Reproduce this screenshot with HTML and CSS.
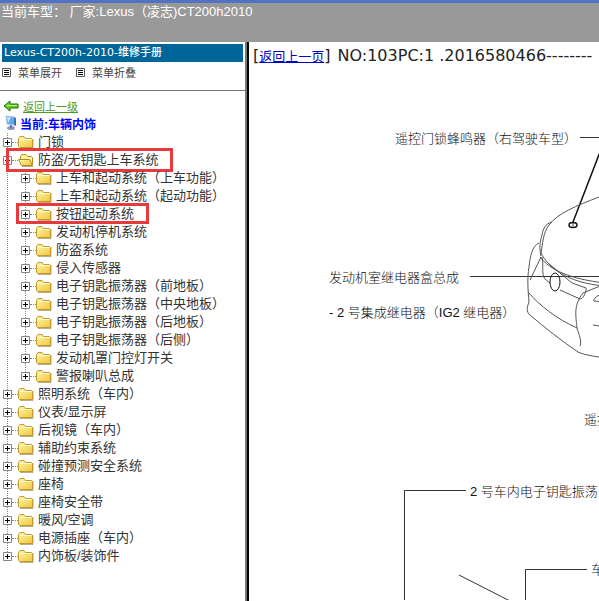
FILE: index.html
```
<!DOCTYPE html>
<html lang="zh-CN">
<head>
<meta charset="UTF-8">
<title>Lexus-CT200h-2010-维修手册</title>
<link rel="stylesheet" href="styles.css">
</head>
<body>
<!-- shared icons -->
<svg class="defs" width="0" height="0">
  <defs>
    <linearGradient id="gold" x1="0" y1="0" x2="1" y2="1">
      <stop offset="0" stop-color="#fff6a8"/>
      <stop offset="1" stop-color="#f0c63c"/>
    </linearGradient>
    <symbol id="plus" viewBox="0 0 9 9">
      <path d="M.5 .5h8v8h-8z" fill="#fff" stroke="#848484"/>
      <path d="M2 4.5h5M4.5 2v5" stroke="#000"/>
    </symbol>
    <symbol id="minus" viewBox="0 0 9 9">
      <path d="M.5 .5h8v8h-8z" fill="#fff" stroke="#848484"/>
      <path d="M2 4.5h5" stroke="#000"/>
    </symbol>
    <symbol id="folder" viewBox="0 0 16 14">
      <path d="M2 13.5h13V4" fill="none" stroke="#8a7a40" opacity=".6"/>
      <path d="M.5 11.500V3.500L2 1.500h4l1.500 2h6l1 1v8h-13z" fill="url(#gold)" stroke="#c29a2c"/>
      <path d="M2 4.500h11.500" stroke="#fffbd0"/>
    </symbol>
    <symbol id="folder-open" viewBox="0 0 16 14">
      <path d="M2.500 11V3.500L4 1.500h4l1.500 2h4l1 1v7z" fill="#fff3a0" stroke="#b08c24"/>
      <path d="M.5 6.500h11l3 6h-11z" fill="url(#gold)" stroke="#b08c24"/>
      <path d="M4 13.500h11" stroke="#8a7a40" opacity=".6"/>
    </symbol>
    <symbol id="list" viewBox="0 0 9 9">
      <path d="M.5 .5h8v8h-8z" fill="#fff" stroke="#555"/>
      <path d="M2 2.500h5M2 4.500h5M2 6.500h5" stroke="#000"/>
    </symbol>
  </defs>
</svg>

<header class="top">当前车型：&nbsp;厂家:Lexus（凌志)CT200h2010</header>

<div class="frames">
  <aside class="side">
    <h1 class="side-title">Lexus-CT200h-2010-维修手册</h1>
    <div class="tools">
      <button type="button" id="expand"><svg width="9" height="9"><use href="#list"/></svg>菜单展开</button>
      <button type="button" id="collapse"><svg width="9" height="9"><use href="#list"/></svg>菜单折叠</button>
    </div>

    <div class="where">
      <a class="back" href="#"><svg width="16" height="12" viewBox="0 0 16 12"><path d="M1 6l6-5v3h8v4H7v3z" fill="#5fd21c" stroke="#1c6b0c"/><path d="M4 5.500h10" stroke="#b6f58a"/></svg><span>返回上一级</span></a>
      <div class="current"><svg width="16" height="16" viewBox="0 0 16 16"><path d="M3 1l8 1 1 8-8-1z" fill="#5aaef0" stroke="#a9c4dc"/><path d="M4 2l4 .5L5 8z" fill="#c8e8ff"/><path d="M11 2l2 1v8l-2-1z" fill="#3a6fb8"/><ellipse cx="8" cy="13" rx="4" ry="2" fill="#8e98c8"/><path d="M7 10h2v3H7z" fill="#6a78b0"/></svg>当前:车辆内饰</div>
    </div>

    <ul class="tree">
      <li><div class="row"><svg class="box"><use href="#plus"/></svg><svg class="folder"><use href="#folder"/></svg><a href="#">门锁</a></div></li>
      <li>
        <div class="row marked"><svg class="box"><use href="#minus"/></svg><svg class="folder"><use href="#folder-open"/></svg><a href="#">防盗/无钥匙上车系统</a></div>
        <ul>
          <li><div class="row"><svg class="box"><use href="#plus"/></svg><svg class="folder"><use href="#folder"/></svg><a href="#">上车和起动系统（上车功能）</a></div></li>
          <li><div class="row"><svg class="box"><use href="#plus"/></svg><svg class="folder"><use href="#folder"/></svg><a href="#">上车和起动系统（起动功能）</a></div></li>
          <li><div class="row marked"><svg class="box"><use href="#plus"/></svg><svg class="folder"><use href="#folder"/></svg><a href="#">按钮起动系统</a></div></li>
          <li><div class="row"><svg class="box"><use href="#plus"/></svg><svg class="folder"><use href="#folder"/></svg><a href="#">发动机停机系统</a></div></li>
          <li><div class="row"><svg class="box"><use href="#plus"/></svg><svg class="folder"><use href="#folder"/></svg><a href="#">防盗系统</a></div></li>
          <li><div class="row"><svg class="box"><use href="#plus"/></svg><svg class="folder"><use href="#folder"/></svg><a href="#">侵入传感器</a></div></li>
          <li><div class="row"><svg class="box"><use href="#plus"/></svg><svg class="folder"><use href="#folder"/></svg><a href="#">电子钥匙振荡器（前地板）</a></div></li>
          <li><div class="row"><svg class="box"><use href="#plus"/></svg><svg class="folder"><use href="#folder"/></svg><a href="#">电子钥匙振荡器（中央地板）</a></div></li>
          <li><div class="row"><svg class="box"><use href="#plus"/></svg><svg class="folder"><use href="#folder"/></svg><a href="#">电子钥匙振荡器（后地板）</a></div></li>
          <li><div class="row"><svg class="box"><use href="#plus"/></svg><svg class="folder"><use href="#folder"/></svg><a href="#">电子钥匙振荡器（后侧）</a></div></li>
          <li><div class="row"><svg class="box"><use href="#plus"/></svg><svg class="folder"><use href="#folder"/></svg><a href="#">发动机罩门控灯开关</a></div></li>
          <li><div class="row"><svg class="box"><use href="#plus"/></svg><svg class="folder"><use href="#folder"/></svg><a href="#">警报喇叭总成</a></div></li>
        </ul>
      </li>
      <li><div class="row"><svg class="box"><use href="#plus"/></svg><svg class="folder"><use href="#folder"/></svg><a href="#">照明系统（车内）</a></div></li>
      <li><div class="row"><svg class="box"><use href="#plus"/></svg><svg class="folder"><use href="#folder"/></svg><a href="#">仪表/显示屏</a></div></li>
      <li><div class="row"><svg class="box"><use href="#plus"/></svg><svg class="folder"><use href="#folder"/></svg><a href="#">后视镜（车内）</a></div></li>
      <li><div class="row"><svg class="box"><use href="#plus"/></svg><svg class="folder"><use href="#folder"/></svg><a href="#">辅助约束系统</a></div></li>
      <li><div class="row"><svg class="box"><use href="#plus"/></svg><svg class="folder"><use href="#folder"/></svg><a href="#">碰撞预测安全系统</a></div></li>
      <li><div class="row"><svg class="box"><use href="#plus"/></svg><svg class="folder"><use href="#folder"/></svg><a href="#">座椅</a></div></li>
      <li><div class="row"><svg class="box"><use href="#plus"/></svg><svg class="folder"><use href="#folder"/></svg><a href="#">座椅安全带</a></div></li>
      <li><div class="row"><svg class="box"><use href="#plus"/></svg><svg class="folder"><use href="#folder"/></svg><a href="#">暖风/空调</a></div></li>
      <li><div class="row"><svg class="box"><use href="#plus"/></svg><svg class="folder"><use href="#folder"/></svg><a href="#">电源插座（车内）</a></div></li>
      <li><div class="row"><svg class="box"><use href="#plus"/></svg><svg class="folder"><use href="#folder"/></svg><a href="#">内饰板/装饰件</a></div></li>
    </ul>
  </aside>

  <main class="page">
    <div class="page-head">[<a href="#">返回上一页</a>]<span class="no">NO:103PC:1 .2016580466--------</span></div>

    <!-- parts location diagram -->
    <svg class="diagram" width="700" height="530" viewBox="253 70 700 530">
      <g class="lead">
        <path d="M580 137.500h60"/>
        <path class="thick" d="M573 222l34-88"/>
        <path d="M470 276.500h170"/>
        <path d="M466 490.500h-61.500V620"/>
        <path d="M587 569.500h-61.500V620"/>
        <path d="M459 575l51 26"/>
      </g>
      <g class="car">
        <path d="M640 182L599 197C576 206 558 213 549 225C543 233 543 242 541 253"/>
        <path d="M552 222C545 224 543 229 542 235C540 242 539 247 541 256"/>
        <path d="M539 243C532 246 530 257 529 267C527 279 528 290 529 302C527 307 526 312 530 315C545 328 562 341 578 352C585 355 592 356 605 358"/>
        <path d="M528 292C540 306 557 319 577 328"/>
        <path d="M541 253C548 267 567 283 605 286"/>
        <path d="M540 257C550 270 570 279 605 283"/>
        <path d="M541 257L530 280"/>
        <path d="M542 257C544 265 541 274 545 279L550 283M560 290L580 299C583 299 585 294 586 291V288L572 283L548 263"/>
        <path d="M605 284L583 293C573 306 576 316 577 328C579 335 582 341 580 346"/>
        <path d="M605 293C597 295 593 299 594 301L605 302M593 325L605 327"/>
        <ellipse class="dark" cx="555" cy="282" rx="5" ry="9"/>
        <ellipse class="dark thick" cx="573" cy="225" rx="4" ry="2.500"/>
        <path d="M573 223v4"/>
      </g>
      <text x="395" y="143">遥控门锁蜂鸣器（右驾驶车型）</text>
      <text x="329" y="282">发动机室继电器盒总成</text>
      <text x="329" y="317">- 2 号集成继电器（IG2 继电器）</text>
      <text x="584" y="424">遥控</text>
      <text x="470" y="496">2 号车内电子钥匙振荡</text>
      <text x="591" y="574">车</text>
    </svg>
  </main>
</div>

<script>
  const sub = document.querySelector('.tree ul');
  document.getElementById('expand').onclick = () => { sub.hidden = false; };
  document.getElementById('collapse').onclick = () => { sub.hidden = true; };
</script>
</body>
</html>
```
FILE: styles.css
```
* { box-sizing: border-box; }
body { margin: 0; height: 100vh; display: flex; flex-direction: column; overflow: hidden; background: #fff; color: #333; font-family: "Liberation Sans", "Noto Sans CJK SC", sans-serif; font-size: 13px; }
a { color: inherit; text-decoration: none; }
svg { flex: none; }
.defs { position: absolute; }

.top { flex: none; height: 42px; padding-left: 1px; border-top: 3px solid #5273c4; background: #999; color: #fff; line-height: 18px; white-space: nowrap; }

.frames { flex: 1; min-height: 0; display: flex; }
.side { flex: none; width: 247px; border-right: 2px solid #777; overflow: hidden; white-space: nowrap; }
.side-title { margin: 2px 2px 0; height: 18px; padding-left: 2px; background: #069; color: #fff; font-family: "DejaVu Sans", "Noto Sans CJK SC", sans-serif; font-size: 11px; font-weight: 500; line-height: 18px; }

.tools { display: flex; gap: 14px; height: 29px; padding: 0 2px 8px; border-bottom: 1px solid #777; }
.tools button { display: flex; align-items: center; gap: 7px; padding: 0; border: 0; background: none; color: #444; font: inherit; font-size: 11px; }

.where { padding: 6px 0 2px 3px; }
.back { display: flex; align-items: center; gap: 4px; height: 18px; color: #4a9a2a; font-size: 11px; text-decoration: underline; }
.current { display: flex; align-items: center; gap: 1px; height: 16px; color: #00f; font-size: 12px; font-weight: bold; }

/* folder tree, dotted guide lines */
.tree, .tree ul { margin: 0; padding: 0; list-style: none; background: repeating-linear-gradient(#888 0 1px, transparent 1px 2px) 7px 0 / 1px calc(100% - 9px) no-repeat; }
.tree ul { margin-left: 18px; }
.row { display: flex; align-items: center; height: 18px; padding-left: 3px; position: relative; width: max-content; line-height: 16px; }
.box { width: 9px; height: 9px; }
.folder { width: 16px; height: 14px; margin: 0 4px 0 6px; }
.row::before { content: ""; position: absolute; left: 12px; top: 9px; width: 6px; border-top: 1px dotted #888; }
.marked::after { content: ""; position: absolute; inset: -3px -14px -3px 6px; border: 3px solid #e8393c; }
.tree ul .marked::after { inset: -2px -15px -1px -2px; }

.page { flex: 1; min-width: 0; border-left: 2px solid #000; padding-left: 4px; overflow: hidden; }
.page-head { height: 28px; line-height: 28px; color: #222; font-family: "DejaVu Sans", sans-serif; font-size: 16px; white-space: nowrap; }
.page-head a { color: #00c; font-family: "Noto Sans CJK SC", sans-serif; font-size: 13px; text-decoration: underline; }
.no { margin-left: 7px; }

.diagram { display: block; font-size: 13px; }
.diagram text { fill: #111; font-weight: 300; }
.lead { fill: none; stroke: #333; }
.car { fill: none; stroke: #555; }
.dark { stroke: #111; }
.thick { stroke: #111; stroke-width: 1.5; }
```
